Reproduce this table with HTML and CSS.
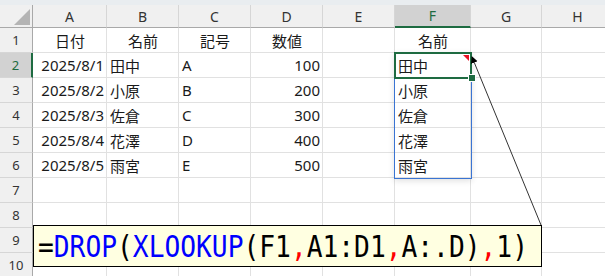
FILE: index.html
```html
<!DOCTYPE html>
<html lang="ja">
<head>
<meta charset="utf-8">
<title>DROP XLOOKUP</title>
<link rel="stylesheet" href="styles.css">
</head>
<body>
<div class="page">
  <div class="topband"></div>
  <div class="sheet">
    <div class="hd corner"><div class="tri"></div></div>
    <div class="hd col">A</div><div class="hd col">B</div><div class="hd col">C</div><div class="hd col">D</div><div class="hd col">E</div><div class="hd col active-col">F</div><div class="hd col">G</div><div class="hd col">H</div>

    <div class="hd row">1</div>
    <div class="c ctr">日付</div><div class="c ctr">名前</div><div class="c ctr">記号</div><div class="c ctr">数値</div><div class="c"></div><div class="c ctr">名前</div><div class="c"></div><div class="c"></div>

    <div class="hd row active-row">2</div>
    <div class="c r">2025/8/1</div><div class="c">田中</div><div class="c">A</div><div class="c r">100</div><div class="c"></div><div class="c">田中</div><div class="c"></div><div class="c"></div>

    <div class="hd row">3</div>
    <div class="c r">2025/8/2</div><div class="c">小原</div><div class="c">B</div><div class="c r">200</div><div class="c"></div><div class="c">小原</div><div class="c"></div><div class="c"></div>

    <div class="hd row">4</div>
    <div class="c r">2025/8/3</div><div class="c">佐倉</div><div class="c">C</div><div class="c r">300</div><div class="c"></div><div class="c">佐倉</div><div class="c"></div><div class="c"></div>

    <div class="hd row">5</div>
    <div class="c r">2025/8/4</div><div class="c">花澤</div><div class="c">D</div><div class="c r">400</div><div class="c"></div><div class="c">花澤</div><div class="c"></div><div class="c"></div>

    <div class="hd row">6</div>
    <div class="c r">2025/8/5</div><div class="c">雨宮</div><div class="c">E</div><div class="c r">500</div><div class="c"></div><div class="c">雨宮</div><div class="c"></div><div class="c"></div>

    <div class="hd row">7</div>
    <div class="c"></div><div class="c"></div><div class="c"></div><div class="c"></div><div class="c"></div><div class="c"></div><div class="c"></div><div class="c"></div>

    <div class="hd row">8</div>
    <div class="c"></div><div class="c"></div><div class="c"></div><div class="c"></div><div class="c"></div><div class="c"></div><div class="c"></div><div class="c"></div>

    <div class="hd row">9</div>
    <div class="c"></div><div class="c"></div><div class="c"></div><div class="c"></div><div class="c"></div><div class="c"></div><div class="c"></div><div class="c"></div>

    <div class="hd row">10</div>
    <div class="c"></div><div class="c"></div><div class="c"></div><div class="c"></div><div class="c"></div><div class="c"></div><div class="c"></div><div class="c"></div>
  </div>

  <div class="spill"></div>
  <div class="activecell"><div class="note"></div></div>
  <div class="handle"></div>

  <svg class="arrow" width="605" height="276" viewBox="0 0 605 276">
    <defs>
      <marker id="ah" markerWidth="8" markerHeight="8" refX="6" refY="4" orient="auto" markerUnits="userSpaceOnUse">
        <path d="M0,0.5 L7,4 L0,7.5 Z" fill="#000"/>
      </marker>
    </defs>
    <line x1="541" y1="225" x2="472" y2="57" stroke="#333" stroke-width="1" marker-end="url(#ah)"/>
  </svg>

  <div class="formula"><span class="ftext">=<b class="fn">DROP</b>(<b class="fn">XLOOKUP</b>(F1<i class="sep">,</i>A1:D1<i class="sep">,</i>A:.D)<i class="sep">,</i>1)</span></div>
</div>
</body>
</html>
```

FILE: styles.css
```css
html, body {
  margin: 0;
  padding: 0;
  background: #fff;
}

.page {
  position: relative;
  width: 605px;
  height: 276px;
  overflow: hidden;
  font-family: "Noto Sans", "Noto Sans CJK JP", sans-serif;
}

.topband {
  height: 5px;
  background: #e9edf0;
}

.sheet {
  display: grid;
  grid-template-columns: 33px 74px 72px 72px 72px 72px 76px 71px 72px;
  grid-template-rows: 23px repeat(10, 25px);
}

.hd {
  box-sizing: border-box;
  background: #f0f0f0;
  color: #333;
  font-size: 14px;
  display: flex;
  align-items: center;
  justify-content: center;
  border-right: 1px solid #d6d6d6;
  border-bottom: 1px solid #d6d6d6;
}

.hd.col {
  border-bottom: 1px solid #a9a9a9;
}

.hd.row {
  border-right: 1px solid #a9a9a9;
  font-size: 13px;
}

.hd.corner {
  border-right: 1px solid #a9a9a9;
  border-bottom: 1px solid #a9a9a9;
  justify-content: flex-end;
  align-items: flex-end;
  padding: 0 2px 2px 0;
}

.tri {
  width: 16px;
  height: 16px;
  background: #b4b4b4;
  clip-path: polygon(100% 0, 100% 100%, 0 100%);
}

.hd.active-col {
  background: #d2d2d2;
  color: #1e6b41;
  border-bottom: 2px solid #1e6b41;
}

.hd.active-row {
  background: #d2d2d2;
  color: #1e6b41;
  border-right: 2px solid #1e6b41;
}

.c {
  box-sizing: border-box;
  border-right: 1px solid #e1e1e1;
  border-bottom: 1px solid #e1e1e1;
  font-size: 15px;
  color: #1a1a1a;
  display: flex;
  align-items: center;
  padding: 0 2px 0 3px;
  white-space: nowrap;
}

.c.r {
  justify-content: flex-end;
}

.c.ctr {
  justify-content: center;
}

.spill {
  position: absolute;
  left: 394px;
  top: 52px;
  width: 78px;
  height: 127px;
  box-sizing: border-box;
  border: 1px solid #3a74d3;
  box-shadow: 0 2px 6px rgba(0, 0, 0, 0.12);
}

.activecell {
  position: absolute;
  left: 394px;
  top: 52px;
  width: 78px;
  height: 27px;
  box-sizing: border-box;
  border: 2px solid #1e6b41;
}

.note {
  position: absolute;
  right: 1px;
  top: 1px;
  width: 6px;
  height: 6px;
  background: #e81123;
  clip-path: polygon(0 0, 100% 0, 100% 100%);
}

.handle {
  position: absolute;
  left: 469px;
  top: 75px;
  width: 6px;
  height: 6px;
  background: #1e6b41;
  outline: 1px solid #fff;
}

.arrow {
  position: absolute;
  left: 0;
  top: 0;
}

.formula {
  position: absolute;
  left: 33px;
  top: 225px;
  width: 509px;
  height: 42px;
  box-sizing: border-box;
  border: 1px solid #000;
  background: #ffffe1;
  display: flex;
  align-items: center;
  padding-left: 4px;
  overflow: hidden;
}

.ftext {
  display: inline-block;
  font-family: "DejaVu Sans Mono", "Liberation Mono", monospace;
  font-size: 30px;
  line-height: 1;
  color: #000;
  white-space: nowrap;
  transform: scaleX(0.875);
  transform-origin: left center;
  margin-top: 1px;
}

.fn {
  font-weight: normal;
  color: #0000ff;
}

.sep {
  font-style: normal;
  color: #ff0000;
}
```
